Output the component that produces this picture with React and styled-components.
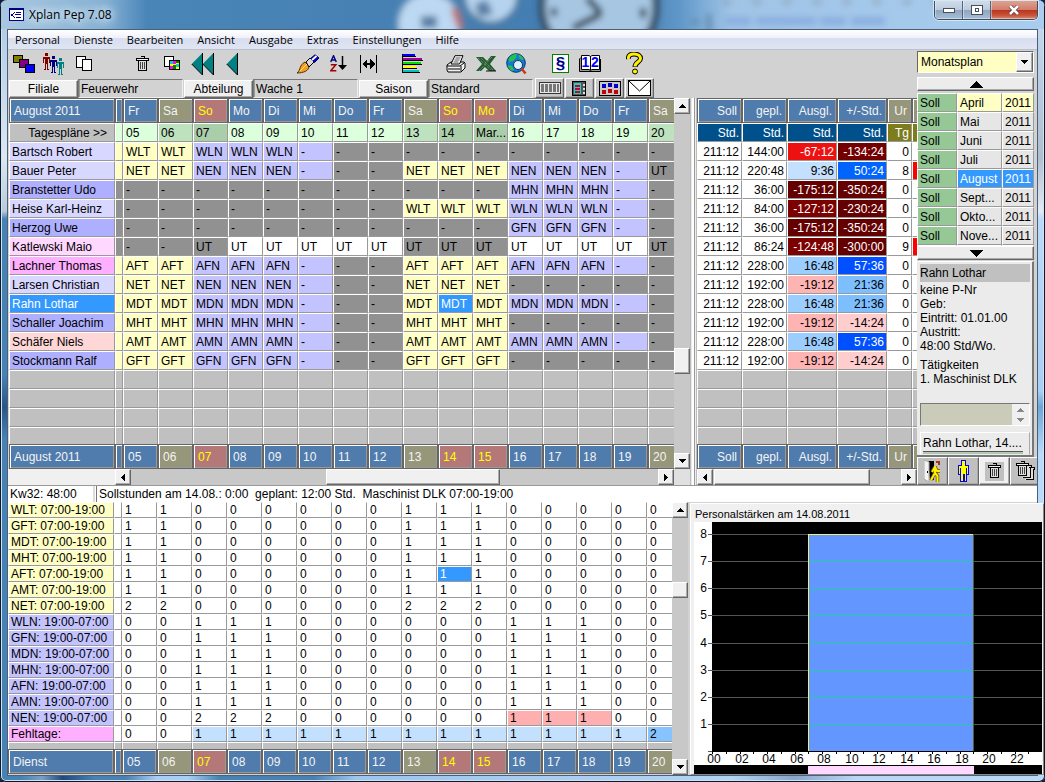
import React from "react";
import styled, { createGlobalStyle, css } from "styled-components";

const c = {
  blue: "#4f7bad",
  olive: "#96967a",
  rose: "#b47878",
  yellow: "#ffffc3",
  violet: "#c3c3ff",
  grey: "#919191",
  empty: "#c0c0c0",
  select: "#3399ff",
  line: "#999999",
  dark: "#666666",
  face: "#f0f0f0",
  panel: "#d2d2d2",
};

const GlobalStyle = createGlobalStyle`
  *, *::before, *::after { box-sizing: border-box; }
  body {
    margin: 0;
    background: #10203a;
    font: 12px/14px "Liberation Sans", Arial, sans-serif;
    color: #000;
  }
  button, input, select, textarea { font: inherit; color: inherit; margin: 0; padding: 0; border-radius: 0; }
  svg { display: block; }
`;

const raised = css`
  border: 1px solid;
  border-color: #fff #666 #666 #fff;
  box-shadow: inset -1px -1px #aaa;
`;

/* ---------- window frame ---------- */

const Window = styled.div`
  position: relative;
  display: flex;
  flex-direction: column;
  min-height: 100vh;
  padding: 0 8px 7px;
  border-radius: 7px 7px 6px 6px;
  overflow: hidden;
  box-shadow: inset 0 0 0 1px #0d1a2b, inset 0 0 0 2px #cfe3f4;
  background:
    linear-gradient(90deg, #4682b4 0 2%, #7aa0c4 4%, #1f4a80 6%, #4682b4 9% 12%, #a8cff5 15%, #a8cff5 18%, #4682b4 21% 30%, #9cc6ee 34%, #b3d4f3 70%, #88a6cc 76%, #b9d8f7 82%) bottom / 100% 7px no-repeat,
    linear-gradient(180deg, #a9c8e2, #dce8f2 20%, #b9cadb 27%, #4682b4 28%, #4682b4 48%, #2a5684 52%, #4682b4 56%) left / 8px 100% no-repeat,
    linear-gradient(180deg, #c6dcf2, #aebfd0 20%, #e3eaf2 27%, #b9dafa 28%, #a8cff5 50%, #6ba6d8 52%, #b9dafa 58%) right / 8px 100% no-repeat,
    #5f97c6;
`;

const TitleBar = styled.header`
  position: relative;
  display: flex;
  height: 29px;
  margin: 0 -7px;
  padding-left: 8px;
  overflow: hidden;
  background: linear-gradient(90deg, #a9c8e0 0, #86b1d4 10%, #4a85b8 14%, #437cb0 60%, #5f97c8 65%, #a0c4e6 70%, #a9cdee 100%);
`;

const Backdrop = styled.svg`
  position: absolute;
  left: 0;
  top: 0;
`;

const Caption = styled.h1`
  position: relative;
  flex: 1;
  display: flex;
  align-items: center;
  gap: 5px;
  margin: 0;
  font: 12px/16px "Open Sans", "Noto Sans", sans-serif;
  text-shadow: 0 0 8px #dcecf8, 0 0 8px #dcecf8, 0 0 12px #dcecf8;
`;

const WindowControls = styled.div`
  position: relative;
  display: flex;
  height: 19px;
  margin: 1px 6px 0 0;
  border: 1px solid #3a4d66;
  border-top: 0;
  border-radius: 0 0 5px 5px;
  overflow: hidden;
  box-shadow: 0 0 0 1px #d5e6f5;
`;

const ControlButton = styled.button`
  display: grid;
  place-items: center;
  width: ${(p) => (p.$close ? 46 : 28)}px;
  border: 0;
  border-right: ${(p) => (p.$close ? "0" : "1px solid #53657c")};
  box-shadow: inset 1px 0 #ffffff66, inset 0 -1px #ffffff66;
  background: ${(p) =>
    p.$close
      ? "linear-gradient(#e0a090, #d17f6c 48%, #b8321b 50%, #c8553c 80%, #dd8d6e)"
      : "linear-gradient(#d0dcea, #bccbdc 48%, #8fa5bf 50%, #a9bed6)"};
`;

const Client = styled.main`
  flex: 1;
  display: flex;
  flex-direction: column;
  background: ${c.panel};
  box-shadow: 0 0 0 1px #4b5f78;
  margin-top: 1px;
`;

const MenuBar = styled.nav`
  display: flex;
  height: 20px;
  padding-left: 7px;
  gap: 14px;
  align-items: center;
  border-bottom: 1px solid #b9c0d0;
  background: linear-gradient(#fff, #f0f2fa 40%, #d8deef 42%, #e0e5f4);
`;

const MenuItem = styled.button`
  border: 0;
  background: none;
  font: 11px/16px "Open Sans", "Noto Sans", sans-serif;
`;

/* ---------- toolbar ---------- */

const Upper = styled.div`
  display: flex;
`;

const PlanArea = styled.div`
  flex: 1;
  min-width: 0;
`;

const Toolbar = styled.div`
  display: flex;
  height: 27px;
  padding-left: 1px;
`;

const ToolGroup = styled.div`
  display: flex;
  margin-right: ${(p) => p.$gap || 14}px;
`;

const ToolButton = styled.button`
  display: grid;
  place-items: center;
  width: 30px;
  height: 27px;
  border: 0;
  background: none;
`;

const FilterRow = styled.div`
  display: flex;
  align-items: flex-end;
  height: 21px;
  padding-left: 1px;
`;

const FilterButton = styled.button`
  width: 69px;
  height: 18px;
  background: ${c.face};
  ${raised}
`;

const FilterField = styled.input`
  width: 105px;
  height: 19px;
  margin: 0 1px 0 0;
  padding-left: 2px;
  border: 1px solid;
  border-color: #777 #eee #eee #777;
  box-shadow: inset 1px 0 #999;
  background: ${c.panel};
  outline: 0;
`;

const ViewButtons = styled.div`
  display: flex;
  gap: 1px;
  margin-left: 1px;
`;

const ViewButton = styled.button`
  display: grid;
  place-items: center;
  width: 29px;
  height: 20px;
  background: #c8c8c8;
  ${raised}
`;

/* ---------- tables ---------- */

const Panes = styled.div`
  display: grid;
  grid-template-columns: minmax(0, 1fr) 16px 7px 220px;
`;

const Clip = styled.div`
  overflow: hidden;
  min-width: 0;
  padding-left: ${(p) => p.$inset || 0}px;
`;

const Grid = styled.table`
  table-layout: fixed;
  width: ${(p) => p.$width}px;
  border-collapse: separate;
  border-spacing: 0;
`;

const HeadCell = styled.th`
  height: 25px;
  padding: 0 ${(p) => (p.$right ? 4 : 0)}px 0 ${(p) => (p.$right ? 0 : 4)}px;
  border: 1px solid ${c.dark};
  box-shadow: inset 1px 1px #fff, inset -1px -1px ${c.line};
  background: ${(p) => p.$bg || c.blue};
  color: ${(p) => (p.$bg === c.rose ? "#ffff00" : "#f4f4f4")};
  font-weight: normal;
  text-align: ${(p) => (p.$right ? "right" : "left")};
  white-space: nowrap;
  overflow: hidden;
`;

const Cell = styled.td`
  height: ${(p) => p.$h || 19}px;
  padding: 0 ${(p) => (p.$right ? p.$pad || 2 : 0)}px 0 2px;
  border: 1px solid;
  border-color: #fff ${c.line} ${c.line} #fff;
  background: ${(p) => p.$bg || "#fff"};
  color: ${(p) => p.$fg || "#000"};
  font-weight: normal;
  line-height: 14px;
  text-align: ${(p) => (p.$right ? "right" : "left")};
  white-space: nowrap;
  overflow: hidden;
`;

const ShiftCell = styled(Cell)`
  height: 16px;
  line-height: 14px;
`;

const FillCell = styled(Cell)`
  height: ${(p) => p.$h}px;
  background: ${c.empty};
  border-bottom: ${(p) => (p.$cut ? "0" : `1px solid ${c.line}`)};
`;

const Splitter = styled.div`
  border: solid #bbb;
  border-width: 0 1px;
  background: linear-gradient(90deg, #e8e8e8 0 1px, #fff 1px 3px, #999 3px 4px, #eee 4px);
`;

/* ---------- scroll bars ---------- */

const ScrollBar = styled.div`
  display: grid;
  background: #c8c8c8;
  ${(p) =>
    p.$horizontal
      ? `grid-template-columns: 16px ${p.$before}fr ${p.$thumb}px ${p.$after}fr 16px; height: 16px;`
      : `grid-template-rows: 16px ${p.$before}fr ${p.$thumb}px ${p.$after}fr 16px; width: 16px;`}
`;

const ScrollButton = styled.button`
  display: grid;
  place-items: center;
  background: ${c.face};
  ${raised}
`;

const Thumb = styled.div`
  background: ${c.face};
  ${raised}
`;

const ScrollRow = styled.div`
  display: flex;
  height: 16px;
  background: ${c.face};
  padding-left: ${(p) => p.$lead || 0}px;

  > div { flex: 1; }
`;

const Corner = styled.div`
  background: #e0e0e0;
`;

/* ---------- side column ---------- */

const Side = styled.aside`
  width: 120px;
  display: flex;
  flex-direction: column;
  padding-right: 3px;
`;

const SelectBox = styled.div`
  display: flex;
  height: 22px;
  margin-top: 1px;
  border: 1px solid;
  border-color: #666 #fff #fff #666;
  background: ${c.yellow};
`;

const PlanSelect = styled.select`
  flex: 1;
  min-width: 0;
  appearance: none;
  border: 0;
  padding-left: 3px;
  background: ${c.yellow};
`;

const SelectArrow = styled.span`
  display: grid;
  place-items: center;
  width: 17px;
  background: ${c.face};
  ${raised}
`;

const StepButton = styled.button`
  display: grid;
  place-items: center;
  height: 14px;
  margin: ${(p) => (p.$top ? "4px 0 2px" : "0")};
  background: #ececec;
  ${raised}
`;

const MonthClip = styled.div`
  height: 153px;
  overflow: hidden;
`;

const Info = styled.section`
  flex: 1;
  padding: 2px 2px 0 3px;
  margin-top: 1px;
  background: #ebebeb;
  border-right: 2px solid #777;
  border-bottom: 2px solid #777;
  border-top: 1px solid #fff;
`;

const InfoName = styled.h2`
  margin: 0 0 1px;
  height: 18px;
  font: 12px/18px "Liberation Sans", Arial, sans-serif;
  background: ${c.empty};
`;

const InfoLines = styled.p`
  margin: 0 0 5px;
  line-height: 14px;
  white-space: nowrap;
`;

const NoteBox = styled.div`
  display: flex;
  height: 23px;
  margin-top: 17px;
  border: 1px solid;
  border-color: #777 #fff #fff #777;
`;

const Note = styled.textarea`
  flex: 1;
  min-width: 0;
  resize: none;
  border: 0;
  background: #cbcbb9;
`;

const Spin = styled.div`
  width: 17px;
  display: grid;
  place-items: center;
  background: ${c.face};
`;

const Current = styled.div`
  height: 23px;
  margin-top: 6px;
  padding: 3px 2px 0;
  border: 1px solid;
  border-color: #fff #aaa transparent #fff;
  white-space: nowrap;
  overflow: hidden;

  &::after {
    content: "";
    display: block;
    height: 3px;
    margin: 1px 4px 0 0;
    border-top: 1px solid #555;
    background: #b4c8b4;
  }
`;

const ActionRow = styled.div`
  display: grid;
  grid-template-columns: repeat(4, 31px);
  height: 28px;
  width: 120px;
  overflow: hidden;
`;

const ActionButton = styled.button`
  display: grid;
  place-items: center;
  background: ${(p) => (p.$light ? c.face : c.empty)};
  ${raised}
`;

const IconPlate = styled.span`
  display: grid;
  place-items: center;
  width: 19px;
  height: 19px;
  background: ${c.empty};
`;

/* ---------- status and lower part ---------- */

const Status = styled.div`
  display: flex;
  height: 17px;
  border-top: 1px solid ${c.line};
  background: #fff;
  line-height: 17px;
  white-space: pre;
`;

const StatusWeek = styled.div`
  width: 87px;
  padding-left: 2px;
  border-right: 2px solid #ddd;
`;

const StatusText = styled.div`
  margin-left: 1px;
  padding-left: 2px;
  border-left: 1px solid #777;
`;

const Lower = styled.div`
  flex: 1;
  display: grid;
  grid-template-columns: minmax(0, 1fr) 16px 349px;
  background: ${c.panel};
`;

const ChartPanel = styled.section`
  position: relative;
  margin: 1px -7px 0 2px;
  padding: 2px 1px 0 3px;
  border: 1px solid;
  border-color: #fff #888 #888 #fff;
  background: ${c.face};
`;

const ChartTitle = styled.h2`
  margin: 0;
  padding-left: 1px;
  font: 11px/16px "Liberation Sans", Arial, sans-serif;
`;

const Chart = styled.svg`
  width: 100%;
  height: auto;
  background: #fff;
`;

/* ---------- icons ---------- */

function Icon({ w, h, children, smooth }) {
  return (
    <svg width={w} height={h} viewBox={`0 0 ${w} ${h}`} shapeRendering={smooth ? "auto" : "crispEdges"} fill="none" aria-hidden="true">
      {children}
    </svg>
  );
}

const arrows = {
  up: "M0 4h7v-1h-1v-1h-1v-1h-1v-1h-1v1h-1v1h-1v1h-1z",
  down: "M0 0h7v1h-1v1h-1v1h-1v1h-1v-1h-1v-1h-1v-1h-1z",
  left: "M4 0v7h-1v-1h-1v-1h-1v-1h-1v-1h1v-1h1v-1h1v-1z",
  right: "M0 0v7h1v-1h1v-1h1v-1h1v-1h-1v-1h-1v-1h-1v-1z",
};

function Arrow({ dir }) {
  const wide = dir === "up" || dir === "down";
  return (
    <Icon w={wide ? 7 : 4} h={wide ? 4 : 7}>
      <path d={arrows[dir]} fill="#000" />
    </Icon>
  );
}

const AppIcon = () => (
  <Icon w={15} h={13}>
    <rect width="15" height="13" fill="#000080" />
    <rect x="1" y="2" width="13" height="10" fill="#fff" />
    <path d="M7 4h5v1H7zM6 6h6v1H6zM7 9h5v1H7zM5 4h1v1H5zM4 5h1v1H4zM2 6h2v2H2zM4 8h1v1H4zM5 9h1v1H5z" fill="#000080" />
  </Icon>
);

const Squares = () => (
  <Icon w={22} h={18}>
    <rect x=".5" y=".5" width="9" height="7" fill="#808000" stroke="#000" />
    <rect x="6.500" y="4.500" width="9" height="8" fill="#800080" stroke="#000" />
    <rect x="12.500" y="9.500" width="9" height="8" fill="#0000ff" stroke="#000" />
  </Icon>
);

const Person = ({ x, y, s }) => (
  <g transform={`translate(${x} ${y})`} fill={s}>
    <path d="M2 0h3v3h-3zM0 4h7v6h-1v-4h-1v10h1v1h-2v-6h-1v6h-2v-1h1v-10h-1v4h-1z" />
  </g>
);

const People = () => (
  <Icon w={22} h={22}>
    <Person x={0} y={0} s="#800000" />
    <Person x={7} y={3} s="#000080" />
    <Person x={14} y={5} s="#008080" />
  </Icon>
);

const Docs = () => (
  <Icon w={17} h={15}>
    <path d="M.5.5h9v11h-9z" fill="#fff" stroke="#000" />
    <path d="M6.500 3.500h9v11h-9z" fill="#fff" stroke="#000" />
  </Icon>
);

const TrashShape = () => (
  <g>
    <path d="M2.500 4.500h8v10h-8z" fill="#ddd" stroke="#000" />
    <path d="M.5 2.500h12v1.500h-12z" fill="#eee" stroke="#000" />
    <path d="M4.500.5h4v2" stroke="#000" />
    <path d="M4.500 6v7M6.500 6v7M8.500 6v7" stroke="#444" />
  </g>
);

const Trash = () => (
  <Icon w={13} h={16}>
    <TrashShape />
  </Icon>
);

const TrashStack = () => (
  <Icon w={20} h={20}>
    <path d="M13 6.500h5.500v2h-1v10h-8M10 4.500h5.500v2h-1v10h-8" fill="#ddd" stroke="#000" />
    <TrashShape />
  </Icon>
);

const CopyColour = () => (
  <Icon w={17} h={15}>
    <path d="M.5.5h9v10h-9z" fill="#fff" stroke="#000" />
    <path d="M5.500 4.500h10v9h-10z" fill="#ffff00" stroke="#000" />
    <path d="M6 5h3v3h-3zM12 8h3v3h-3z" fill="#00d0d0" />
    <path d="M9 5h3v3h-3zM6 10h3v3h-3z" fill="#ff00ff" />
    <path d="M12 5h3v2h-3zM9 9h3v4h-3z" fill="#008000" />
  </Icon>
);

const Back = ({ twice }) => (
  <Icon w={twice ? 23 : 12} h={22} smooth>
    <path d="M11 .5v21L.7 11z" fill="#008080" />
    <path d="M11.500 0v22L.7 11" stroke="#000" />
    {twice && <path d="M22 .5v21L11.700 11z" fill="#008080" />}
    {twice && <path d="M22.500 0v22L11.700 11" stroke="#000" />}
  </Icon>
);

const Brush = () => (
  <Icon w={23} h={20} smooth>
    <path d="M0 19c4-3 2-8 8-11l4 4c0 5-6 7-12 7z" fill="#f5a020" stroke="#5a3000" />
    <path d="M3 17l7-7" stroke="#ffe0a0" />
    <path d="M9 8l4-4 4 4-5 5z" fill="#d8d8d8" stroke="#000" />
    <path d="M13.500 4.500L18 .8l4 3.200-4.500 4.500z" fill="#0000c0" stroke="#000060" />
    <path d="M15 6l4.500-4" stroke="#fff" strokeWidth="1.800" />
  </Icon>
);

const SortAZ = () => (
  <Icon w={17} h={18} smooth>
    <path d="M.7 7L3.500.7 6.300 7M1.700 5h3.600" stroke="#000080" strokeWidth="1.400" />
    <path d="M.8 9.700h5l-5 6h5.500" stroke="#a00000" strokeWidth="1.500" />
    <path d="M12.500 1v12" stroke="#000" strokeWidth="1.500" />
    <path d="M8 10h9l-4.500 5z" fill="#000" />
  </Icon>
);

const FitWidth = () => (
  <Icon w={17} h={18}>
    <path d="M.5 0v18M16.500 0v18" stroke="#000" />
    <path d="M4 8h9v2H4z" fill="#000" />
    <path d="M2 9l5-5v10zM15 9l-5-5v10z" fill="#000" />
  </Icon>
);

const Bars = () => (
  <Icon w={21} h={19}>
    {[["#0000ff", 12], ["#a000a0", 19], ["#00e000", 18], ["#ffff00", 13], ["#00c0c0", 16]].map(([f, w], i) => (
      <g key={f}>
        <rect x="1" y={i * 4} width={w} height="2" fill={f} />
        <rect x="1" y={i * 4 + 2} width={w + 1} height="1" fill="#000" />
      </g>
    ))}
    <path d="M.5 0v19" stroke="#000" />
  </Icon>
);

const Printer = () => (
  <Icon w={20} h={18} smooth>
    <path d="M1 10l4-3h13l1 1v5l-4 4H2l-1-2z" fill="#f2f2f2" stroke="#000" />
    <path d="M5 9L9 .7h8L13.500 9z" fill="#fff" stroke="#000" />
    <path d="M9.500 3h5M8.500 5h5M7.500 7h5" stroke="#555" />
    <path d="M1 11h13l4-3M2 14h12M15 11v5" stroke="#000" />
  </Icon>
);

const SheetX = () => (
  <Icon w={20} h={16} smooth>
    <path d="M0 1h7l4 4 4-5h5l-6 8 6 7h-7l-4-4-4 4H0l6-7z" fill="#245c30" />
    <path d="M2 2l13 12M16 1L3 15M5 2l12 12" stroke="#86a88a" strokeWidth="1" strokeDasharray="1 1" />
    <path d="M10 15h10" stroke="#111" />
  </Icon>
);

const Globe = () => (
  <Icon w={21} h={22} smooth>
    <circle cx="10" cy="10" r="9.300" fill="#1677d8" stroke="#033d6e" />
    <path d="M3 5c3-4 7-4 8-4l-1 4-3 3-4 1zM12 2c3 0 5 2 6 5l-4-1zM2 12l4 1 2 4-2 1c-2-1-4-3-4-6z" fill="#23c14d" />
    <path d="M15.500 15.500l4 5" stroke="#c83a1c" strokeWidth="2.500" />
    <circle cx="12" cy="12" r="4.500" fill="#d8f2ff" stroke="#234" />
  </Icon>
);

const Paragraph = () => (
  <Icon w={17} h={19} smooth>
    <rect x=".5" y=".5" width="16" height="18" fill="#fff" stroke="#008000" />
    <text x="8.500" y="15" textAnchor="middle" fontSize="17" fontWeight="bold" fill="#000090" fontFamily="Liberation Sans, sans-serif">§</text>
  </Icon>
);

const Book = () => (
  <Icon w={23} h={18} smooth>
    <path d="M2 2.500L.5 4v12.500h21V4" fill="#999" stroke="#000" />
    <path d="M2.500.5H10l1.500 1 1.500-1h7.500v14H13l-1.500 1-1.500-1H2.500z" fill="#fff" stroke="#000" />
    <path d="M11.500 1v14" stroke="#000" />
    <text x="6.500" y="12" textAnchor="middle" fontSize="14" fontWeight="bold" fill="#0000ff" fontFamily="Liberation Sans, sans-serif">1</text>
    <text x="16" y="12" textAnchor="middle" fontSize="14" fontWeight="bold" fill="#0000ff" fontFamily="Liberation Sans, sans-serif">2</text>
  </Icon>
);

const Help = () => (
  <Icon w={17} h={23} smooth>
    <path d="M2.500 7C2 3 5 2 8 2c4 0 6.500 2 6.500 4.500C14.500 10 9 10 9 15" stroke="#000" strokeWidth="5" />
    <path d="M2.500 7C2 3 5 2 8 2c4 0 6.500 2 6.500 4.500C14.500 10 9 10 9 14.500" stroke="#fff000" strokeWidth="3" />
    <circle cx="9" cy="19.500" r="2.500" fill="#fff000" stroke="#000" />
  </Icon>
);

const Columns = () => (
  <Icon w={22} h={12}>
    <rect x=".5" y=".5" width="21" height="11" fill="#e8e8e8" stroke="#333" />
    <path d="M2 2h3v8H2zM6 2h3v8H6zM10 2h3v8h-3zM14 2h3v8h-3zM18 2h2v8h-2z" fill="#777" />
  </Icon>
);

const Organizer = () => (
  <Icon w={15} h={15}>
    <rect x=".5" y=".5" width="13" height="14" fill="#555" stroke="#000" />
    <rect x="2" y="2" width="7" height="11" fill="#20d0d0" />
    <path d="M3 4.500h5M3 7.500h5M3 10.500h5" stroke="#d00020" strokeWidth="2" />
    <path d="M11 3h2v2h-2zM11 7h2v2h-2zM11 11h2v2h-2z" fill="#ddd" />
  </Icon>
);

const Calendar = () => (
  <Icon w={22} h={15}>
    <rect width="22" height="15" fill="#000" />
    <path d="M1 1h20v13H1z" fill="#c8c8c8" />
    <path d="M3 3h4v4h-4zM9 2h4v4h-4zM15 3h4v4h-4z" fill="#0000c8" />
    <path d="M3 9h4v4h-4zM9 8h4v4h-4zM15 9h4v4h-4z" fill="#c80000" />
  </Icon>
);

const Mail = () => (
  <Icon w={23} h={16} smooth>
    <rect x=".5" y=".5" width="22" height="15" fill="#fff" stroke="#000" />
    <path d="M1 1l10.500 10L22 1" stroke="#000" />
  </Icon>
);

const Exit = () => (
  <Icon w={18} h={23} smooth>
    <path d="M4 1h6v19H6z" fill="#000" />
    <path d="M0 0l5 2v20l-5-3z" fill="#f4f4f4" stroke="#aaa" />
    <path d="M3.500 11v2" stroke="#000" />
    <path d="M11 6v7l-4 7M11 13l2.500 3v6M11 7l-3 5M11 7l2 4h3" stroke="#705000" strokeWidth="3.500" />
    <path d="M11 6v7l-4 7M11 13l2.500 3v6M11 7l-3 5M11 7l2 4h3" stroke="#fff000" strokeWidth="2" />
    <path d="M12 1h4v4h-4z" fill="#b03020" />
    <path d="M12 3h2v2h-2z" fill="#f0c090" />
  </Icon>
);

const Figure = () => (
  <Icon w={13} h={23}>
    <path d="M4.500.5h4v5h3v9h-2v7h-2.500v-7h-1v7H3.500v-7h-2.500v-9h3.500z" fill="#ffff00" stroke="#0000ff" />
    <path d="M3.500 7.500v6M9.500 7.500v6" stroke="#0000ff" />
  </Icon>
);

/* ---------- data ---------- */

const dayNames = ["Fr", "Sa", "So", "Mo", "Di", "Mi", "Do", "Fr", "Sa", "So", "Mo", "Di", "Mi", "Do", "Fr", "Sa"];
const dayNumbers = dayNames.map((_, i) => String(i + 5).padStart(2, "0"));
const holidays = [2, 9, 10];
const saturdays = [1, 8, 15];
const dayTone = (i, base, sat, off) => (holidays.includes(i) ? off : saturdays.includes(i) ? sat : base);

const light = "#d7d7ff";
const deep = "#afafff";

// "." is a blocked day, "-" a free day, "ut" leave on a blocked day
const staff = [
  ["Bartsch Robert", light, "WLT WLT WLN WLN WLN - . . . . . . . . . ."],
  ["Bauer Peter", light, "NET NET NEN NEN NEN - . . NET NET NET NEN NEN NEN - ut"],
  ["Branstetter Udo", deep, ". . . . . . . . . . . MHN MHN MHN - ."],
  ["Heise Karl-Heinz", light, ". . . . . . . . WLT WLT WLT WLN WLN WLN - ."],
  ["Herzog Uwe", deep, ". . . . . . . . . . . GFN GFN GFN - ."],
  ["Katlewski Maio", "#ffd7ff", ". . ut UT UT UT UT UT ut ut ut UT UT UT UT ut"],
  ["Lachner Thomas", "#ffafff", "AFT AFT AFN AFN AFN - . . AFT AFT AFT AFN AFN AFN - ."],
  ["Larsen Christian", light, "NET NET NEN NEN NEN - . . NET NET NET . . . . ."],
  ["Rahn Lothar", c.select, "MDT MDT MDN MDN MDN - . . MDT *MDT MDT MDN MDN MDN - ."],
  ["Schaller Joachim", deep, "MHT MHT MHN MHN MHN - . . MHT MHT MHT . . . . ."],
  ["Schäfer Niels", "#ffd7d7", "AMT AMT AMN AMN AMN - . . AMT AMT AMT AMN AMN AMN - ."],
  ["Stockmann Ralf", deep, "GFT GFT GFN GFN GFN - . . GFT GFT GFT . . . . ."],
];

function shiftTone(code) {
  if (code[0] === "*") return c.select;
  if (code === "." || code === "ut") return c.grey;
  if (code === "UT") return "#fff";
  return code.endsWith("T") ? c.yellow : c.violet;
}

const maroon = "#640000";
const hours = [
  ["144:00", "-67:12", "#ee1111", "-134:24", "#730000", 0],
  ["220:48", "9:36", "#c3e1ff", "50:24", "#0064ff", 8],
  ["36:00", "-175:12", maroon, "-350:24", maroon, 0],
  ["84:00", "-127:12", "#7d0000", "-230:24", maroon, 0],
  ["36:00", "-175:12", maroon, "-350:24", maroon, 0],
  ["86:24", "-124:48", "#7d0000", "-300:00", maroon, 9],
  ["228:00", "16:48", "#9bcdff", "57:36", "#0050ff", 0],
  ["192:00", "-19:12", "#ffb4b4", "21:36", "#7dbeff", 0],
  ["228:00", "16:48", "#9bcdff", "21:36", "#7dbeff", 0],
  ["192:00", "-19:12", "#ffb4b4", "-14:24", "#ffcdcd", 0],
  ["228:00", "16:48", "#9bcdff", "57:36", "#0050ff", 0],
  ["192:00", "-19:12", "#ffb4b4", "-14:24", "#ffcdcd", 0],
];
const darkTones = ["#ee1111", "#730000", "#7d0000", maroon, "#0064ff", "#0050ff"];
const textOn = (bg) => (darkTones.includes(bg) ? "#fff" : "#000");

const dayLine = "1100000011100000";
const nightLine = "0011100000011100";
const services = [
  ...["WLT", "GFT", "MDT", "MHT", "AFT", "AMT"].map((n) => [`${n}: 07:00-19:00`, c.yellow, dayLine]),
  ["NET: 07:00-19:00", c.yellow, "2200000022200000"],
  ...["WLN", "GFN", "MDN", "MHN", "AFN", "AMN"].map((n) => [`${n}: 19:00-07:00`, c.violet, nightLine]),
  ["NEN: 19:00-07:00", c.violet, "0022200000011100"],
  ["Fehltage:", "#ffafff", "0011111111111112"],
];

function serviceTone(row, col) {
  if (row === 4 && col === 9) return c.select;
  if (row === 13 && col > 10 && col < 14) return "#ffafaf";
  if (row === 14 && col === 15) return "#87c3ff";
  if (row === 14 && col > 1) return "#c3e1ff";
  return "#fff";
}

const months = ["April", "Mai", "Juni", "Juli", "August", "Sept...", "Okto...", "Nove...", ""];
const fillRows = [19, 19, 19, 17];

/* ---------- parts ---------- */

function Scroll({ horizontal, before, thumb, after }) {
  return (
    <ScrollBar $horizontal={horizontal} $before={before} $thumb={thumb} $after={after}>
      <ScrollButton aria-label={horizontal ? "Nach links" : "Nach oben"}>
        <Arrow dir={horizontal ? "left" : "up"} />
      </ScrollButton>
      <span />
      <Thumb />
      <span />
      <ScrollButton aria-label={horizontal ? "Nach rechts" : "Nach unten"}>
        <Arrow dir={horizontal ? "right" : "down"} />
      </ScrollButton>
    </ScrollBar>
  );
}

const Col = styled.col`
  width: ${(p) => p.$w}px;
`;

const DayCols = () => (
  <colgroup>
    <Col $w={106} />
    <Col $w={8} />
    {dayNumbers.map((d) => (
      <Col key={d} $w={35} />
    ))}
  </colgroup>
);

function DayHeader({ title, labels }) {
  return (
    <tr>
      <HeadCell>{title}</HeadCell>
      <HeadCell />
      {labels.map((d, i) => (
        <HeadCell key={i} $bg={dayTone(i, c.blue, c.olive, c.rose)}>{d}</HeadCell>
      ))}
    </tr>
  );
}

function PlanTable() {
  return (
    <Grid $width={674}>
      <DayCols />
      <thead>
        <DayHeader title="August 2011" labels={dayNames} />
      </thead>
      <tbody>
        <tr>
          <Cell $bg={c.empty} $right $pad={7}>Tagespläne &gt;&gt;</Cell>
          <Cell $bg="#dcffdc" />
          {dayNumbers.map((d, i) => (
            <Cell key={d} $bg={dayTone(i, "#dcffdc", "#bee1be", "#aacdaa")}>{i === 10 ? "Mar..." : d}</Cell>
          ))}
        </tr>
        {staff.map(([name, tone, line]) => {
          const codes = line.split(" ");
          return (
            <tr key={name}>
              <Cell $bg={tone} $fg={tone === c.select ? "#fff" : "#000"}>{name}</Cell>
              <Cell $bg={shiftTone(codes[0])} />
              {codes.map((code, i) => (
                <Cell key={i} $bg={shiftTone(code)} $fg={code[0] === "*" ? "#fff" : "#000"}>
                  {code === "." ? "-" : code.replace("*", "").toUpperCase()}
                </Cell>
              ))}
            </tr>
          );
        })}
        {fillRows.map((h, r) => (
          <tr key={r}>
            {Array.from({ length: 18 }, (_, i) => (
              <FillCell key={i} $h={h} $cut={r === 3} />
            ))}
          </tr>
        ))}
      </tbody>
      <tfoot>
        <DayHeader title="August 2011" labels={dayNumbers} />
      </tfoot>
    </Grid>
  );
}

const sumWidths = [45, 45, 50, 50, 25, 35];
const sumHeads = ["Soll", "gepl.", "Ausgl.", "+/-Std.", "Ur", ""];

function SumHeader() {
  return (
    <tr>
      {sumHeads.map((t, i) => (
        <HeadCell key={i} $right $bg={i > 3 ? c.olive : c.blue}>{t}</HeadCell>
      ))}
    </tr>
  );
}

function SumTable() {
  return (
    <Grid $width={250}>
      <colgroup>
        {sumWidths.map((w, i) => (
          <Col key={i} $w={w} />
        ))}
      </colgroup>
      <thead>
        <SumHeader />
        <tr>
          {["Std.", "Std.", "Std.", "Std.", "Tg", ""].map((t, i) => (
            <Cell as="th" key={i} $right $bg={i > 3 ? "#7d7d1e" : "#00508c"} $fg="#fff">{t}</Cell>
          ))}
        </tr>
      </thead>
      <tbody>
        {hours.map(([plan, bal, balBg, total, totalBg, leave], i) => (
          <tr key={i}>
            <Cell $right>211:12</Cell>
            <Cell $right>{plan}</Cell>
            <Cell $right $bg={balBg} $fg={textOn(balBg)}>{bal}</Cell>
            <Cell $right $bg={totalBg} $fg={textOn(totalBg)}>{total}</Cell>
            <Cell $right>{leave}</Cell>
            <Cell $bg={leave ? "#ff0000" : "#fff"} />
          </tr>
        ))}
        {fillRows.map((h, r) => (
          <tr key={r}>
            {sumHeads.map((_, i) => (
              <FillCell key={i} $h={h} $cut={r === 3} />
            ))}
          </tr>
        ))}
      </tbody>
      <tfoot>
        <SumHeader />
      </tfoot>
    </Grid>
  );
}

function ServiceTable() {
  return (
    <Grid $width={674}>
      <DayCols />
      <tbody>
        {services.map(([name, tone, line], r) => (
          <tr key={name}>
            <ShiftCell $bg={tone}>{name}</ShiftCell>
            <ShiftCell />
            {line.split("").map((n, i) => {
              const bg = serviceTone(r, i);
              return (
                <ShiftCell key={i} $bg={bg} $fg={bg === c.select ? "#fff" : "#000"}>{n}</ShiftCell>
              );
            })}
          </tr>
        ))}
        <tr>
          {Array.from({ length: 18 }, (_, i) => (
            <FillCell key={i} $h={7} $cut />
          ))}
        </tr>
      </tbody>
      <tfoot>
        <DayHeader title="Dienst" labels={dayNumbers} />
      </tfoot>
    </Grid>
  );
}

function StaffChart() {
  const x = (hour) => 18 + Math.round(hour * 13.75);
  const y = (n) => 229 - Math.round(n * 27.1);
  const levels = [1, 2, 3, 4, 5, 6, 7, 8];
  const allHours = Array.from({ length: 24 }, (_, i) => i);
  return (
    <Chart viewBox="0 0 348 252" role="img" aria-label="Personalstärken nach Uhrzeit" fontFamily="Liberation Sans, Arial, sans-serif" fontSize="12">
      <g shapeRendering="crispEdges">
        <rect x="18" y="0" width="330" height="230" fill="#000" />
        {levels.map((n) => (
          <path key={n} d={`M14 ${y(n) + 0.5}H348`} stroke="#555" />
        ))}
        <rect x={x(7)} y={y(8)} width={x(19) - x(7)} height={229 - y(8)} fill="#6496ff" />
        {levels.slice(0, 7).map((n) => (
          <path key={n} d={`M${x(7)} ${y(n) + 0.5}H${x(19)}`} stroke="#28c8aa" />
        ))}
        <path d={`M${x(7) + 0.5} 229V${y(8) + 0.5}H${x(19)}`} stroke="#f0f078" fill="none" />
        <path d={`M${x(19) + 0.5} 229V${y(8)}`} stroke="#5a5a28" />
        <path d="M14 229.500H18" stroke="#555" />
        {allHours.map((h) => (
          <path key={h} d={`M${x(h) + 0.5} 229V232`} stroke="#000" />
        ))}
        <rect x="0" y="243" width="348" height="9" fill="#000" />
        <rect x={x(7)} y="244" width={x(19) - x(7) + 1} height="8" fill="#ffd7ff" />
      </g>
      {levels.map((n) => (
        <text key={n} x="13" y={y(n) + 4} textAnchor="end">{n}</text>
      ))}
      {allHours.filter((h) => h % 2 === 0).map((h) => (
        <text key={h} x={x(h) + 2} y="241" textAnchor="middle">{String(h).padStart(2, "0")}</text>
      ))}
    </Chart>
  );
}

function SidePanel() {
  return (
    <Side>
      <SelectBox>
        <PlanSelect aria-label="Planart" defaultValue="Monatsplan">
          <option>Monatsplan</option>
        </PlanSelect>
        <SelectArrow aria-hidden="true"><Arrow dir="down" /></SelectArrow>
      </SelectBox>
      <StepButton $top aria-label="Früherer Monat">
        <Icon w={14} h={7}><path d="M7 0l7 7H0z" fill="#000" /></Icon>
      </StepButton>
      <MonthClip>
        <Grid $width={117}>
          <colgroup>
            <Col $w={40} />
            <Col $w={45} />
            <Col $w={32} />
          </colgroup>
          <tbody>
            {months.map((m, i) => {
              const bg = i === 0 ? c.yellow : i === 4 ? c.select : "#e6e6e6";
              const fg = i === 4 ? "#fff" : "#000";
              return (
                <tr key={i}>
                  <Cell $bg="#96c896">{m && "Soll"}</Cell>
                  <Cell $bg={bg} $fg={fg}>{m}</Cell>
                  <Cell $bg={bg} $fg={fg}>{m && "2011"}</Cell>
                </tr>
              );
            })}
          </tbody>
        </Grid>
      </MonthClip>
      <StepButton aria-label="Späterer Monat">
        <Icon w={14} h={7}><path d="M0 0h14l-7 7z" fill="#000" /></Icon>
      </StepButton>
      <Info>
        <InfoName>Rahn Lothar</InfoName>
        <InfoLines>
          keine P-Nr<br />Geb:<br />Eintritt: 01.01.00<br />Austritt:<br />48:00 Std/Wo.
        </InfoLines>
        <InfoLines>
          Tätigkeiten<br />1. Maschinist DLK
        </InfoLines>
        <NoteBox>
          <Note aria-label="Notiz" readOnly />
          <Spin>
            <Icon w={7} h={14}>
              <path d="M0 4l3.500-4L7 4zM0 10h7l-3.500 4z" fill="#888" />
            </Icon>
          </Spin>
        </NoteBox>
        <Current>Rahn Lothar, 14....</Current>
      </Info>
      <ActionRow>
        <ActionButton aria-label="Beenden"><Exit /></ActionButton>
        <ActionButton aria-label="Person"><Figure /></ActionButton>
        <ActionButton $light aria-label="Löschen"><IconPlate><Trash /></IconPlate></ActionButton>
        <ActionButton aria-label="Alle löschen"><TrashStack /></ActionButton>
      </ActionRow>
    </Side>
  );
}

const toolGroups = [
  [28, [["Farben", <Squares />], ["Mitarbeiter", <People />], ["Kopieren", <Docs />]]],
  [46, [["Löschen", <Trash />], ["Farbkopie", <CopyColour />], ["Schnell zurück", <Back twice />], ["Zurück", <Back />]]],
  [14, [["Pinsel", <Brush />], ["Sortieren", <SortAZ />], ["Breite", <FitWidth />]]],
  [14, [["Balken", <Bars />]]],
  [14, [["Drucken", <Printer />], ["Tabelle", <SheetX />], ["Internet", <Globe />]]],
  [14, [["Regeln", <Paragraph />], ["Kalender", <Book />]]],
  [14, [["Hilfe anzeigen", <Help />]]],
];

const filters = [["Filiale", "Feuerwehr"], ["Abteilung", "Wache 1"], ["Saison", "Standard"]];
const menus = ["Personal", "Dienste", "Bearbeiten", "Ansicht", "Ausgabe", "Extras", "Einstellungen", "Hilfe"];

export default function App() {
  return (
    <>
      <GlobalStyle />
      <Window>
        <TitleBar>
          <Backdrop width="1045" height="30" viewBox="0 0 1045 30" aria-hidden="true">
            <defs>
              <filter id="soft" x="-20%" y="-50%" width="140%" height="200%">
                <feGaussianBlur stdDeviation="3" />
              </filter>
            </defs>
            <g filter="url(#soft)">
              <circle cx="490" cy="-4" r="27" fill="#b5d3ee" stroke="#53718f" strokeWidth="3" />
              <circle cx="428" cy="24" r="32" fill="#bcd8f2" stroke="#6f93b5" strokeWidth="3" />
              <path d="M453 8l7 20" stroke="#c07070" strokeWidth="7" />
              <path d="M420 16h16v12h-16zM474 4l12-4 6 14-14 3z" fill="#5c7fa5" />
              <circle cx="598" cy="6" r="57" fill="#a6c6e2" stroke="#33485e" strokeWidth="7" />
              <path d="M572 28l28-14M586 -2l14 15M642 8v10M553 8v8" stroke="#2b3947" strokeWidth="6" />
              <path d="M724 21h160" stroke="#8aaee0" strokeWidth="8" strokeDasharray="26 5 60 4" />
              <path d="M708 14v18M690 22h8" stroke="#5f84a8" strokeWidth="4" />
              <path d="M722 2h220" stroke="#8ba2b8" strokeWidth="4" strokeDasharray="8 22" />
            </g>
          </Backdrop>
          <Caption><AppIcon />Xplan Pep 7.08</Caption>
          <WindowControls>
            <ControlButton aria-label="Minimieren">
              <Icon w={12} h={5}><rect x=".5" y=".5" width="11" height="4" fill="#fff" stroke="#444f60" /></Icon>
            </ControlButton>
            <ControlButton aria-label="Maximieren">
              <Icon w={12} h={10}><path d="M.5.5h11v9H.5zM4.500 3.500h3v3h-3z" fill="#fff" stroke="#444f60" /></Icon>
            </ControlButton>
            <ControlButton $close aria-label="Schließen">
              <Icon w={12} h={10} smooth>
                <path d="M2 1l8 8M10 1L2 9" stroke="#5a3a40" strokeWidth="4" />
                <path d="M2 1l8 8M10 1L2 9" stroke="#fff" strokeWidth="2.500" />
              </Icon>
            </ControlButton>
          </WindowControls>
        </TitleBar>
        <Client>
          <MenuBar>
            {menus.map((m) => <MenuItem key={m}>{m}</MenuItem>)}
          </MenuBar>
          <Upper>
            <PlanArea>
              <Toolbar>
                {toolGroups.map(([gap, items], g) => (
                  <ToolGroup key={g} $gap={gap}>
                    {items.map(([label, icon]) => (
                      <ToolButton key={label} aria-label={label}>{icon}</ToolButton>
                    ))}
                  </ToolGroup>
                ))}
              </Toolbar>
              <FilterRow>
                {filters.map(([label, value]) => (
                  <React.Fragment key={label}>
                    <FilterButton>{label}</FilterButton>
                    <FilterField aria-label={label} defaultValue={value} />
                  </React.Fragment>
                ))}
                <ViewButtons>
                  <ViewButton aria-label="Spalten"><Columns /></ViewButton>
                  <ViewButton aria-label="Planer"><Organizer /></ViewButton>
                  <ViewButton aria-label="Monatsansicht"><Calendar /></ViewButton>
                  <ViewButton aria-label="Nachricht"><Mail /></ViewButton>
                </ViewButtons>
              </FilterRow>
              <Panes>
                <Clip $inset={1}><PlanTable /></Clip>
                <Scroll before={234} thumb={26} after={79} />
                <Splitter />
                <Clip><SumTable /></Clip>
                <ScrollRow $lead={107}><Scroll horizontal before={194} thumb={174} after={158} /></ScrollRow>
                <Corner />
                <Splitter />
                <ScrollRow><Scroll horizontal before={1} thumb={156} after={31} /></ScrollRow>
              </Panes>
            </PlanArea>
            <SidePanel />
          </Upper>
          <Status>
            <StatusWeek>Kw32: 48:00</StatusWeek>
            <StatusText>{"Sollstunden am 14.08.: 0:00  geplant: 12:00 Std.  Maschinist DLK 07:00-19:00"}</StatusText>
          </Status>
          <Lower>
            <Clip><ServiceTable /></Clip>
            <Scroll before={64} thumb={16} after={161} />
            <ChartPanel>
              <ChartTitle>Personalstärken am 14.08.2011</ChartTitle>
              <StaffChart />
            </ChartPanel>
          </Lower>
        </Client>
      </Window>
    </>
  );
}
